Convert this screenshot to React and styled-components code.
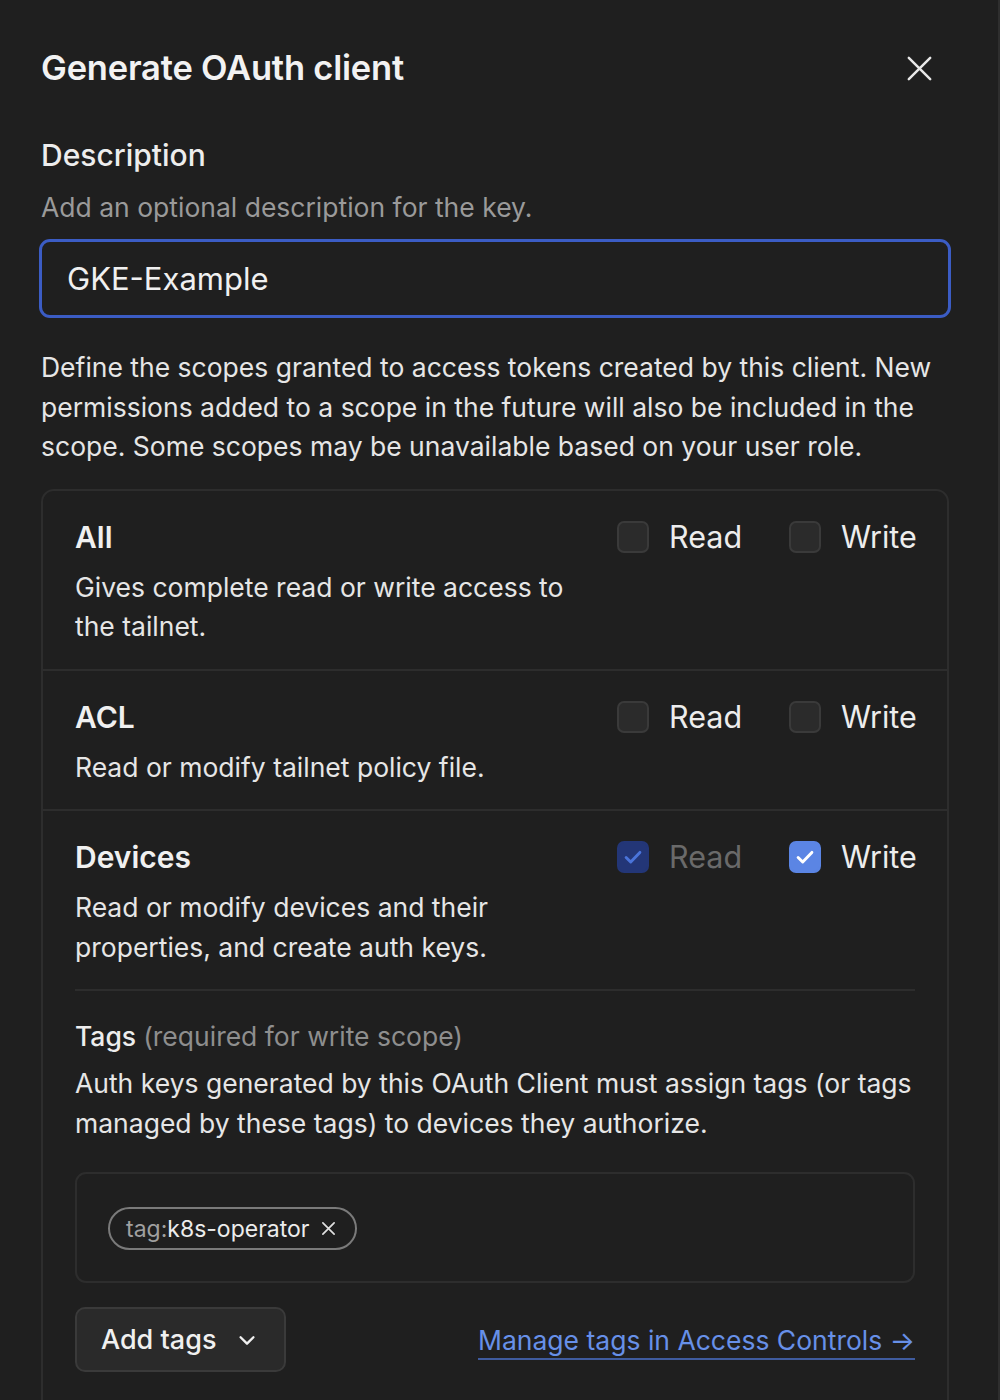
import React from "react";
import styled, { createGlobalStyle } from "styled-components";

const GlobalStyle = createGlobalStyle`
  html, body {
    margin: 0;
    padding: 0;
    background: #1f1f1f;
    overflow: hidden;
  }
  body {
    font-family: Inter, "Noto Sans", sans-serif;
    color: #ececec;
    -webkit-font-smoothing: antialiased;
  }
  * { box-sizing: border-box; }
`;

const Dialog = styled.div`
  width: 1000px;
  min-height: 1400px;
  border-right: 2px solid #2e2e2e;
  padding: 44px 49px 0 41px;
  display: flex;
  flex-direction: column;
`;

const Header = styled.div`
  display: flex;
  align-items: center;
  justify-content: space-between;
  padding-right: 16px;
`;

const Title = styled.h1`
  margin: 0;
  font-size: 34.5px;
  line-height: 48px;
  font-weight: 600;
  color: #f2f2f2;
  letter-spacing: -0.2px;
`;

const CloseButton = styled.button`
  background: none;
  border: none;
  padding: 0;
  width: 28px;
  height: 28px;
  display: flex;
  align-items: center;
  justify-content: center;
  color: #e6e6e6;
`;

const Label = styled.div`
  margin-top: 43px;
  font-size: 30px;
  line-height: 40px;
  font-weight: 500;
  color: #ededed;
`;

const Hint = styled.div`
  margin-top: 12px;
  font-size: 26.5px;
  line-height: 40px;
  color: #9a9a9a;
`;

const TextInput = styled.div`
  margin-top: 12px;
  margin-left: -2px;
  margin-right: -2px;
  height: 79px;
  border: 3px solid #3b5cc4;
  border-radius: 11px;
  display: flex;
  align-items: center;
  padding-left: 25px;
  font-size: 31px;
  color: #f0f0f0;
`;

const Paragraph = styled.p`
  margin: ${(p) => p.$mt || 0}px 0 0;
  font-size: 26.5px;
  line-height: 39.5px;
  color: #e6e6e6;
`;

const Card = styled.div`
  margin-top: 22px;
  border: 2px solid #2d2d2d;
  border-radius: 13px;
  display: flex;
  flex-direction: column;
`;

const Row = styled.div`
  padding: 25px 32px ${(p) => p.$pb || 22}px;
  border-top: ${(p) => (p.$first ? "none" : "2px solid #2d2d2d")};
`;

const RowTop = styled.div`
  display: flex;
  justify-content: space-between;
  align-items: flex-start;
`;

const RowText = styled.div`
  max-width: 510px;
`;

const ScopeName = styled.div`
  font-size: 30px;
  line-height: 42px;
  font-weight: 600;
  color: #f0f0f0;
`;

const ScopeDesc = styled.div`
  margin-top: 10px;
  font-size: 26.5px;
  line-height: 39.5px;
  color: #e6e6e6;
`;

const Checks = styled.div`
  display: flex;
  padding-top: 3px;
`;

const CheckItem = styled.label`
  display: flex;
  align-items: center;
  gap: 20px;
  width: ${(p) => p.$w}px;
  font-size: 30.5px;
  line-height: 36px;
  color: ${(p) => (p.$dim ? "#6a6a6a" : "#ededed")};
`;

const Box = styled.span`
  width: 32px;
  height: 32px;
  border-radius: 7px;
  flex: none;
  display: flex;
  align-items: center;
  justify-content: center;
  background: ${(p) =>
    p.$state === "on" ? "#5b85e4" : p.$state === "dim" ? "#233677" : "#2b2b2b"};
  border: 2px solid
    ${(p) =>
      p.$state === "on" ? "#5b85e4" : p.$state === "dim" ? "#233677" : "#3a3a3a"};
`;

const Divider = styled.div`
  margin-top: 22px;
  height: 2px;
  background: #2d2d2d;
`;

const TagsHead = styled.div`
  margin-top: 25px;
  font-size: 26.5px;
  line-height: 40px;
  color: #ededed;
  font-weight: 500;
  span {
    font-weight: 400;
    color: #8e8e8e;
  }
`;

const TagBox = styled.div`
  margin-top: 29px;
  height: 111px;
  border: 2px solid #2d2d2d;
  border-radius: 11px;
  padding: 33px 31px;
  display: flex;
  align-items: flex-start;
`;

const Chip = styled.div`
  height: 43px;
  border: 2px solid #7a7a7a;
  border-radius: 22px;
  display: flex;
  align-items: center;
  gap: 12px;
  padding: 0 19px 0 16px;
  font-size: 23px;
  color: #ececec;
  span {
    color: #a0a0a0;
  }
`;

const Footer = styled.div`
  margin-top: 24px;
  display: flex;
  justify-content: space-between;
  align-items: center;
`;

const SelectButton = styled.button`
  height: 65px;
  width: 211px;
  background: #2a2a2a;
  border: 2px solid #3a3a3a;
  border-radius: 10px;
  display: flex;
  align-items: center;
  gap: 20px;
  padding: 0 0 0 24px;
  font-family: inherit;
  font-size: 27px;
  font-weight: 500;
  color: #f0f0f0;
`;

const Link = styled.a`
  font-size: 26.5px;
  line-height: 40px;
  color: #6790e8;
  text-decoration: underline;
  text-decoration-color: #3f5b9e;
  text-decoration-thickness: 2px;
  text-underline-offset: 8px;
`;

const Check = ({ color }) => (
  <svg width="22" height="22" viewBox="0 0 24 24" fill="none">
    <path d="M4.5 12.5l5 5L19.5 7" stroke={color} strokeWidth="3.2" strokeLinecap="round" strokeLinejoin="round" />
  </svg>
);

const CheckBox = ({ state, label, w }) => (
  <CheckItem $w={w} $dim={state === "dim"}>
    <Box $state={state}>
      {state === "on" && <Check color="#ffffff" />}
      {state === "dim" && <Check color="#4a74da" />}
    </Box>
    {label}
  </CheckItem>
);

const Scope = ({ name, desc, read, write, first, children, pb }) => (
  <Row $first={first} $pb={pb}>
    <RowTop>
      <RowText>
        <ScopeName>{name}</ScopeName>
        <ScopeDesc>{desc}</ScopeDesc>
      </RowText>
      <Checks>
        <CheckBox state={read} label="Read" w={172} />
        <CheckBox state={write} label="Write" w={126} />
      </Checks>
    </RowTop>
    {children}
  </Row>
);

export default function App() {
  return (
    <>
      <GlobalStyle />
      <Dialog>
        <Header>
          <Title>Generate OAuth client</Title>
          <CloseButton aria-label="Close">
            <svg width="27" height="27" viewBox="0 0 24 24" fill="none">
              <path d="M2.5 2.5l19 19M21.5 2.5l-19 19" stroke="#e8e8e8" strokeWidth="2.2" strokeLinecap="round" />
            </svg>
          </CloseButton>
        </Header>

        <Label>Description</Label>
        <Hint>Add an optional description for the key.</Hint>
        <TextInput>GKE-Example</TextInput>

        <Paragraph $mt={30}>
          Define the scopes granted to access tokens created by this client. New
          permissions added to a scope in the future will also be included in the
          scope. Some scopes may be unavailable based on your user role.
        </Paragraph>

        <Card>
          <Scope
            first
            name="All"
            desc="Gives complete read or write access to the tailnet."
            read="off"
            write="off"
          />
          <Scope
            name="ACL"
            desc="Read or modify tailnet policy file."
            read="off"
            write="off"
          />
          <Scope
            name="Devices"
            desc="Read or modify devices and their properties, and create auth keys."
            read="dim"
            write="on"
            pb={40}
          >
            <Divider />
            <TagsHead>
              Tags <span>(required for write scope)</span>
            </TagsHead>
            <Paragraph $mt={8}>
              Auth keys generated by this OAuth Client must assign tags (or tags
              managed by these tags) to devices they authorize.
            </Paragraph>
            <TagBox>
              <Chip>
                <div>
                  <span>tag:</span>k8s-operator
                </div>
                <svg width="15" height="15" viewBox="0 0 16 16" fill="none">
                  <path d="M2 2l12 12M14 2L2 14" stroke="#e0e0e0" strokeWidth="1.8" strokeLinecap="round" />
                </svg>
              </Chip>
            </TagBox>
            <Footer>
              <SelectButton>
                Add tags
                <svg width="22" height="22" viewBox="0 0 24 24" fill="none">
                  <path d="M5 9l7 7 7-7" stroke="#f0f0f0" strokeWidth="2.6" strokeLinecap="round" strokeLinejoin="round" />
                </svg>
              </SelectButton>
              <Link href="#">Manage tags in Access Controls →</Link>
            </Footer>
          </Scope>
        </Card>
      </Dialog>
    </>
  );
}
